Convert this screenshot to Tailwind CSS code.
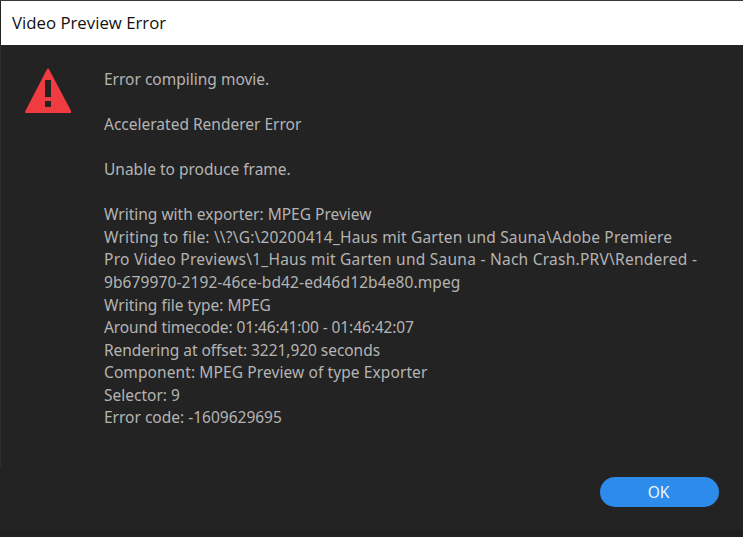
<!DOCTYPE html>
<html><head><meta charset="utf-8"><script src="https://cdn.jsdelivr.net/npm/@tailwindcss/browser@4"></script></head>
<body class="m-0">
<div class="w-[743px] h-[537px] bg-[#232323] flex flex-col overflow-hidden font-['Noto_Sans',sans-serif]">
  <div class="h-[1px] bg-[#3a3a32] shrink-0"></div>
  <div class="h-[44px] shrink-0 ml-[1px] bg-white flex items-center pl-[11px] text-[16.8px] text-[#111] font-['Open_Sans',sans-serif]">Video Preview Error</div>
  <div class="flex flex-1 min-h-0 border-l border-[#2e2e28]">
    <div class="w-[103px] shrink-0 pl-[24px] pt-[23px]">
      <svg width="46" height="46" viewBox="0 0 46 46"><path d="M23 1.5 L45.5 44 H1 Z" fill="#f03c40" stroke="#f03c40" stroke-width="2" stroke-linejoin="round"/><rect x="20" y="12" width="6" height="17" fill="#232323"/><rect x="20" y="33" width="6" height="6" fill="#232323"/></svg>
    </div>
    <div class="flex-1 pt-[23px] text-[15.5px] leading-[22.6px] text-[#b4b4b4] whitespace-nowrap">
      <p>Error compiling movie.</p><p class="mt-[22.6px]">Accelerated Renderer Error</p><p class="mt-[22.6px]">Unable to produce frame.</p>
      <p class="mt-[22.2px]">Writing with exporter: MPEG Preview</p>
      <p><span class="tracking-[0.19px]">Writing to file: \\?\G:\20200414_Haus mit Garten und Sauna\Adobe Premiere</span><br><span class="tracking-[0.25px]">Pro Video Previews\1_Haus mit Garten und Sauna - Nach Crash.PRV\Rendered -</span><br><span class="tracking-[0.1px]">9b679970-2192-46ce-bd42-ed46d12b4e80.mpeg</span></p>
      <p>Writing file type: MPEG</p><p class="tracking-[-0.1px]">Around timecode: 01:46:41:00 - 01:46:42:07</p><p class="tracking-[-0.05px]">Rendering at offset: 3221,920 seconds</p><p class="tracking-[0.1px]">Component: MPEG Preview of type Exporter</p><p>Selector: 9</p><p class="-mt-[0.4px]">Error code: -1609629695</p>
    </div>
  </div>
  <div class="h-[62px] shrink-0 flex justify-end items-start pt-[9px] pr-[24px]">
    <button class="w-[119px] h-[30px] rounded-full bg-[#2d8ceb] text-[#f0f6fd] text-[15.5px] leading-[30px] text-center pr-[2px]">OK</button>
  </div>
  <div class="h-[7px] shrink-0 bg-[#1e1e1e]"></div>
</div>
</body></html>
